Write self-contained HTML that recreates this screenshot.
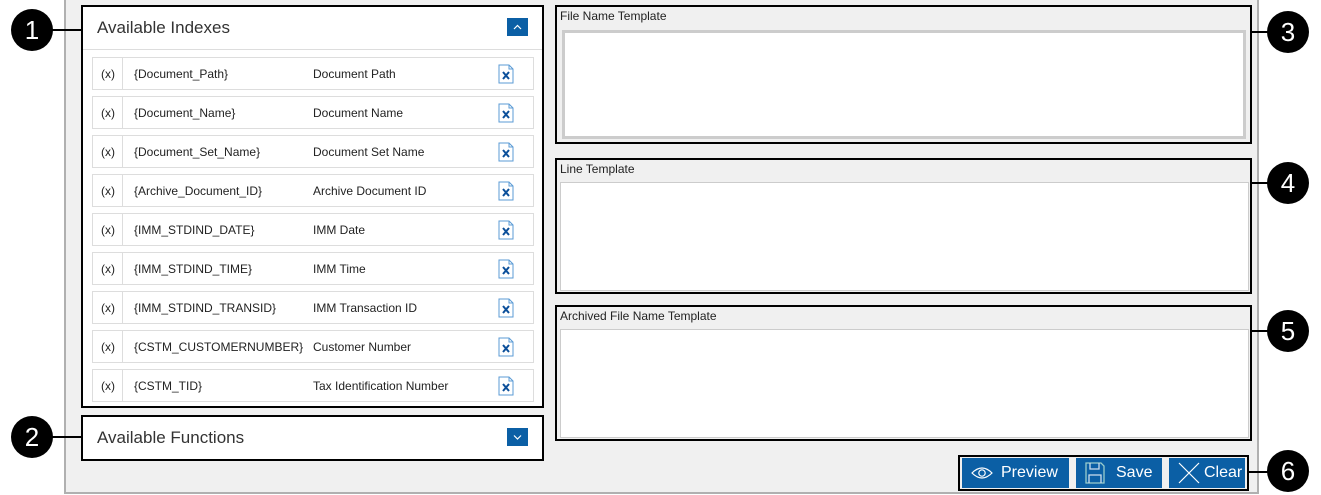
<!DOCTYPE html>
<html><head><style>
body{margin:0;width:1321px;height:495px;background:#fff;position:relative;overflow:hidden;font-family:"Liberation Sans",sans-serif;}
.a{position:absolute;box-sizing:border-box}
.panel{left:64px;top:-2px;width:1195px;height:496px;background:#f0f0f0;border:2px solid #b0b0b0}
.box{border:2px solid #000;background:#fff}
.hd{font-size:17px;color:#333}
.row{left:92px;width:442px;height:33px;border:1px solid #ddd;background:#fff;font-size:12px;color:#222}
.row span{position:absolute;top:9px}
.row .dv{position:absolute;left:29px;top:0;width:1px;height:31px;background:#ddd}
.circ{width:42px;height:42px;border-radius:50%;background:#000;color:#fff;font-size:26px;text-align:center;line-height:42px}
.ln{height:2px;background:#000}
.tb{border:2px solid #000;background:#f0f0f0}
.tb .lb{position:absolute;left:3px;top:2px;font-size:12px;color:#222}
.ta{background:#fff;border:1px solid #ccc}
.btn{background:#0b5fa5;color:#fff;font-size:16px;height:30px;top:458px;line-height:30px}
</style></head><body>
<div class="a panel"></div>
<div class="a box" style="left:81px;top:5px;width:463px;height:403px"></div>
<div class="a hd" style="left:97px;top:18px">Available Indexes</div>
<div class="a" style="left:507px;top:18px;width:21px;height:18px;background:#0b5fa5"><svg width="21" height="18"><path d="M7 11 L10.5 7.5 L14 11" stroke="#fff" fill="none" stroke-width="1.2"/></svg></div>
<div class="a" style="left:83px;top:49px;width:459px;height:1px;background:#ddd"></div>

<div class="a row" style="top:57px"><span style="left:8px">(x)</span><div class="dv"></div><span style="left:41px">{Document_Path}</span><span style="left:220px">Document Path</span><svg style="position:absolute;left:405px;top:6px" width="16" height="20"><path d="M1 1H11L15 5V19H1Z" fill="#fff" stroke="#5b9bd5"/><path d="M11 1V5H15" fill="none" stroke="#5b9bd5"/><path d="M5 8L11 15M11 8L5 15" stroke="#0b4f9a" stroke-width="2"/></svg></div>
<div class="a row" style="top:96px"><span style="left:8px">(x)</span><div class="dv"></div><span style="left:41px">{Document_Name}</span><span style="left:220px">Document Name</span><svg style="position:absolute;left:405px;top:6px" width="16" height="20"><path d="M1 1H11L15 5V19H1Z" fill="#fff" stroke="#5b9bd5"/><path d="M11 1V5H15" fill="none" stroke="#5b9bd5"/><path d="M5 8L11 15M11 8L5 15" stroke="#0b4f9a" stroke-width="2"/></svg></div>
<div class="a row" style="top:135px"><span style="left:8px">(x)</span><div class="dv"></div><span style="left:41px">{Document_Set_Name}</span><span style="left:220px">Document Set Name</span><svg style="position:absolute;left:405px;top:6px" width="16" height="20"><path d="M1 1H11L15 5V19H1Z" fill="#fff" stroke="#5b9bd5"/><path d="M11 1V5H15" fill="none" stroke="#5b9bd5"/><path d="M5 8L11 15M11 8L5 15" stroke="#0b4f9a" stroke-width="2"/></svg></div>
<div class="a row" style="top:174px"><span style="left:8px">(x)</span><div class="dv"></div><span style="left:41px">{Archive_Document_ID}</span><span style="left:220px">Archive Document ID</span><svg style="position:absolute;left:405px;top:6px" width="16" height="20"><path d="M1 1H11L15 5V19H1Z" fill="#fff" stroke="#5b9bd5"/><path d="M11 1V5H15" fill="none" stroke="#5b9bd5"/><path d="M5 8L11 15M11 8L5 15" stroke="#0b4f9a" stroke-width="2"/></svg></div>
<div class="a row" style="top:213px"><span style="left:8px">(x)</span><div class="dv"></div><span style="left:41px">{IMM_STDIND_DATE}</span><span style="left:220px">IMM Date</span><svg style="position:absolute;left:405px;top:6px" width="16" height="20"><path d="M1 1H11L15 5V19H1Z" fill="#fff" stroke="#5b9bd5"/><path d="M11 1V5H15" fill="none" stroke="#5b9bd5"/><path d="M5 8L11 15M11 8L5 15" stroke="#0b4f9a" stroke-width="2"/></svg></div>
<div class="a row" style="top:252px"><span style="left:8px">(x)</span><div class="dv"></div><span style="left:41px">{IMM_STDIND_TIME}</span><span style="left:220px">IMM Time</span><svg style="position:absolute;left:405px;top:6px" width="16" height="20"><path d="M1 1H11L15 5V19H1Z" fill="#fff" stroke="#5b9bd5"/><path d="M11 1V5H15" fill="none" stroke="#5b9bd5"/><path d="M5 8L11 15M11 8L5 15" stroke="#0b4f9a" stroke-width="2"/></svg></div>
<div class="a row" style="top:291px"><span style="left:8px">(x)</span><div class="dv"></div><span style="left:41px">{IMM_STDIND_TRANSID}</span><span style="left:220px">IMM Transaction ID</span><svg style="position:absolute;left:405px;top:6px" width="16" height="20"><path d="M1 1H11L15 5V19H1Z" fill="#fff" stroke="#5b9bd5"/><path d="M11 1V5H15" fill="none" stroke="#5b9bd5"/><path d="M5 8L11 15M11 8L5 15" stroke="#0b4f9a" stroke-width="2"/></svg></div>
<div class="a row" style="top:330px"><span style="left:8px">(x)</span><div class="dv"></div><span style="left:41px">{CSTM_CUSTOMERNUMBER}</span><span style="left:220px">Customer Number</span><svg style="position:absolute;left:405px;top:6px" width="16" height="20"><path d="M1 1H11L15 5V19H1Z" fill="#fff" stroke="#5b9bd5"/><path d="M11 1V5H15" fill="none" stroke="#5b9bd5"/><path d="M5 8L11 15M11 8L5 15" stroke="#0b4f9a" stroke-width="2"/></svg></div>
<div class="a row" style="top:369px"><span style="left:8px">(x)</span><div class="dv"></div><span style="left:41px">{CSTM_TID}</span><span style="left:220px">Tax Identification Number</span><svg style="position:absolute;left:405px;top:6px" width="16" height="20"><path d="M1 1H11L15 5V19H1Z" fill="#fff" stroke="#5b9bd5"/><path d="M11 1V5H15" fill="none" stroke="#5b9bd5"/><path d="M5 8L11 15M11 8L5 15" stroke="#0b4f9a" stroke-width="2"/></svg></div>

<div class="a box" style="left:81px;top:415px;width:463px;height:46px"></div>
<div class="a hd" style="left:97px;top:428px">Available Functions</div>
<div class="a" style="left:507px;top:428px;width:21px;height:18px;background:#0b5fa5"><svg width="21" height="18"><path d="M7 7.5 L10.5 11 L14 7.5" stroke="#fff" fill="none" stroke-width="1.2"/></svg></div>

<div class="a tb" style="left:555px;top:5px;width:697px;height:139px"><div class="lb">File Name Template</div><div class="a ta" style="left:5px;top:23px;width:684px;height:109px;border:3px solid #ccc"></div></div>
<div class="a tb" style="left:555px;top:158px;width:697px;height:136px"><div class="lb">Line Template</div><div class="a ta" style="left:3px;top:22px;width:689px;height:109px"></div></div>
<div class="a tb" style="left:555px;top:305px;width:697px;height:136px"><div class="lb">Archived File Name Template</div><div class="a ta" style="left:3px;top:22px;width:689px;height:109px"></div></div>

<div class="a" style="left:958px;top:455px;width:291px;height:36px;border:2px solid #000;background:#f0f0f0"></div>
<div class="a btn" style="left:962px;width:107px"><svg style="position:absolute;left:9px;top:8px" width="22" height="14"><path d="M1 7Q11 -3 21 7Q11 17 1 7Z" fill="none" stroke="#fff" stroke-width="1.2"/><circle cx="11" cy="7" r="3.2" fill="none" stroke="#fff" stroke-width="1.2"/></svg><span style="position:absolute;left:39px">Preview</span></div>
<div class="a btn" style="left:1076px;width:86px"><svg style="position:absolute;left:9px;top:4px" width="20" height="22"><path d="M1 1H16L19 4V21H1Z" fill="none" stroke="#9cc" stroke-width="1.3"/><path d="M5 1V7H14V1M4 21V13H16V21" fill="none" stroke="#cde" stroke-width="1.3"/></svg><span style="position:absolute;left:40px">Save</span></div>
<div class="a btn" style="left:1169px;width:76px"><svg style="position:absolute;left:9px;top:4px" width="22" height="22"><path d="M1 1L21 21M21 1L1 21" stroke="#fff" stroke-width="1.2"/></svg><span style="position:absolute;left:35px">Clear</span></div>

<div class="a circ" style="left:11px;top:9px">1</div><div class="a ln" style="left:50px;top:29px;width:32px"></div>
<div class="a circ" style="left:11px;top:416px">2</div><div class="a ln" style="left:50px;top:436px;width:32px"></div>
<div class="a circ" style="left:1267px;top:11px">3</div><div class="a ln" style="left:1250px;top:31px;width:20px"></div>
<div class="a circ" style="left:1267px;top:162px">4</div><div class="a ln" style="left:1250px;top:182px;width:20px"></div>
<div class="a circ" style="left:1267px;top:310px">5</div><div class="a ln" style="left:1250px;top:330px;width:20px"></div>
<div class="a circ" style="left:1267px;top:450px">6</div><div class="a ln" style="left:1248px;top:471px;width:22px"></div>
</body></html>
